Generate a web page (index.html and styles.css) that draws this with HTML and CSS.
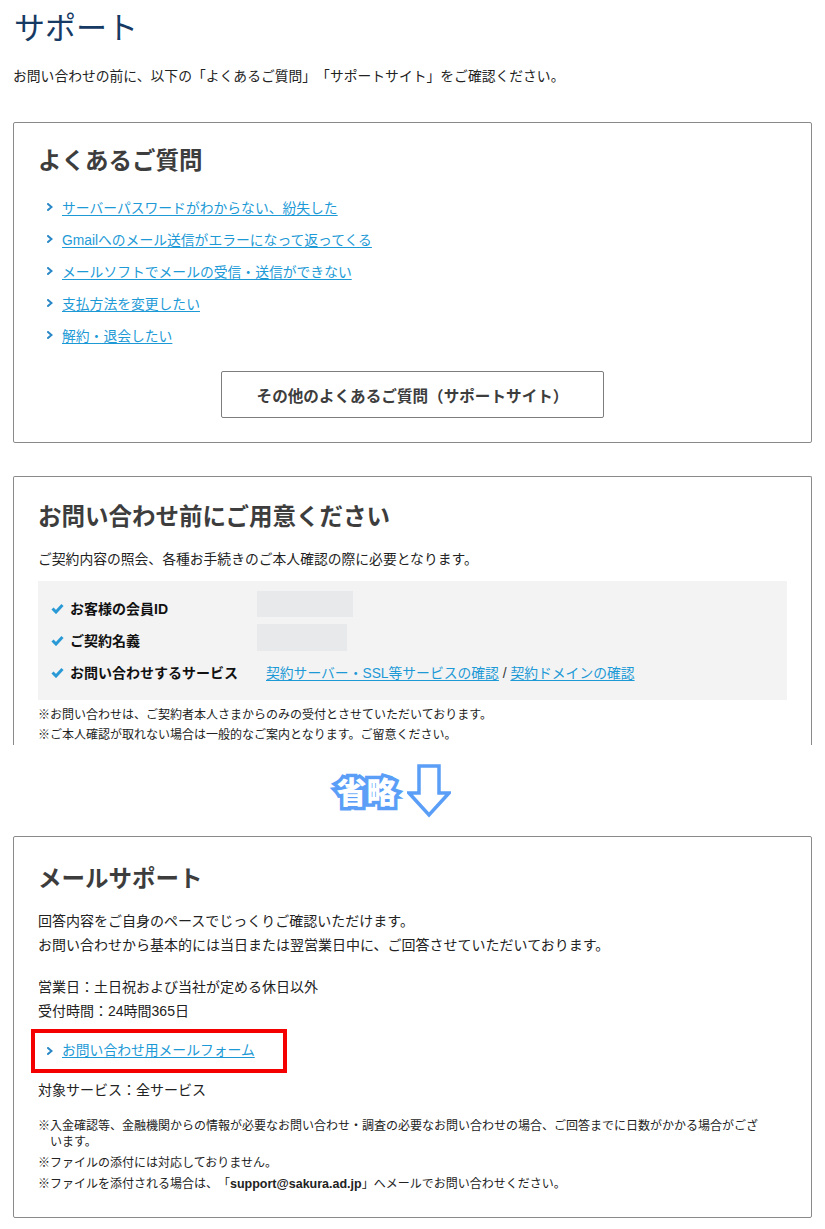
FILE: index.html
```html
<!DOCTYPE html>
<html lang="ja">
<head>
<meta charset="utf-8">
<title>サポート</title>
<link rel="stylesheet" href="styles.css">
</head>
<body>
<div class="page">
  <h1 class="page-title">サポート</h1>
  <p class="intro">お問い合わせの前に、以下の「よくあるご質問」「サポートサイト」をご確認ください。</p>

  <section class="box">
    <h2 class="box-title">よくあるご質問</h2>
    <ul class="links">
      <li><svg class="chev" viewBox="0 0 6 8"><polyline points="1,1 4.5,4 1,7"/></svg><a href="#">サーバーパスワードがわからない、紛失した</a></li>
      <li><svg class="chev" viewBox="0 0 6 8"><polyline points="1,1 4.5,4 1,7"/></svg><a href="#">Gmailへのメール送信がエラーになって返ってくる</a></li>
      <li><svg class="chev" viewBox="0 0 6 8"><polyline points="1,1 4.5,4 1,7"/></svg><a href="#">メールソフトでメールの受信・送信ができない</a></li>
      <li><svg class="chev" viewBox="0 0 6 8"><polyline points="1,1 4.5,4 1,7"/></svg><a href="#">支払方法を変更したい</a></li>
      <li><svg class="chev" viewBox="0 0 6 8"><polyline points="1,1 4.5,4 1,7"/></svg><a href="#">解約・退会したい</a></li>
    </ul>
    <div class="btn-wrap"><a class="btn" href="#">その他のよくあるご質問（サポートサイト）</a></div>
  </section>

  <section class="box cut">
    <h2 class="box-title">お問い合わせ前にご用意ください</h2>
    <p class="desc">ご契約内容の照会、各種お手続きのご本人確認の際に必要となります。</p>
    <div class="panel">
      <div class="row">
        <div class="label"><svg class="check" viewBox="0 0 13 11"><polyline points="1.5,5.5 5,9 11.5,2"/></svg>お客様の会員ID</div>
        <div class="value"><span class="mask m1"></span></div>
      </div>
      <div class="row">
        <div class="label"><svg class="check" viewBox="0 0 13 11"><polyline points="1.5,5.5 5,9 11.5,2"/></svg>ご契約名義</div>
        <div class="value"><span class="mask m2"></span></div>
      </div>
      <div class="row">
        <div class="label"><svg class="check" viewBox="0 0 13 11"><polyline points="1.5,5.5 5,9 11.5,2"/></svg>お問い合わせするサービス</div>
        <div class="value links-inline"><a href="#">契約サーバー・SSL等サービスの確認</a> / <a href="#">契約ドメインの確認</a></div>
      </div>
    </div>
    <ul class="notes small">
      <li>※お問い合わせは、ご契約者本人さまからのみの受付とさせていただいております。</li>
      <li>※ご本人確認が取れない場合は一般的なご案内となります。ご留意ください。</li>
    </ul>
  </section>

  <div class="omit">
    <span class="omit-text">省略</span>
    <svg class="omit-arrow" viewBox="0 0 44 54"><polygon points="12,2 32,2 32,29 42,29 22,51 2,29 12,29"/></svg>
  </div>

  <section class="box mail">
    <h2 class="box-title">メールサポート</h2>
    <p class="text">回答内容をご自身のペースでじっくりご確認いただけます。<br>お問い合わせから基本的には当日または翌営業日中に、ご回答させていただいております。</p>
    <p class="text gap">営業日：土日祝および当社が定める休日以外<br>受付時間：24時間365日</p>
    <div class="highlight">
      <svg class="chev" viewBox="0 0 6 8"><polyline points="1,1 4.5,4 1,7"/></svg><a href="#">お問い合わせ用メールフォーム</a>
    </div>
    <p class="text target">対象サービス：全サービス</p>
    <ul class="notes mail-notes">
      <li>※入金確認等、金融機関からの情報が必要なお問い合わせ・調査の必要なお問い合わせの場合、ご回答までに日数がかかる場合がございます。</li>
      <li>※ファイルの添付には対応しておりません。</li>
      <li>※ファイルを添付される場合は、「<b>support@sakura.ad.jp</b>」へメールでお問い合わせください。</li>
    </ul>
  </section>
</div>
</body>
</html>
```

FILE: styles.css
```css
* { box-sizing: border-box; }
html, body { margin: 0; padding: 0; background: #fff; }
body {
  font-family: "Liberation Sans", "Noto Sans CJK JP", sans-serif;
  color: #222;
  font-size: 14px;
  text-spacing-trim: space-all;
}
.page { padding: 0 13px; }
a { color: #1d9ad6; text-decoration: underline; text-underline-offset: 2px; }

.page-title {
  margin: 9px 0 0 1px;
  font-size: 31px;
  line-height: 40px;
  font-weight: 400;
  color: #163a63;
}
.intro {
  margin: 17px 0 0;
  font-size: 13.8px;
  line-height: 22px;
}

.box {
  margin-top: 34px;
  border: 1px solid #8a8a8a;
  border-radius: 2px;
  padding: 22px 24px 24px;
}
.box + .box { margin-top: 33px; }
.box.mail { margin-top: 0; padding-top: 26px; }
.box.cut {
  border-bottom: none;
  border-radius: 2px 2px 0 0;
  padding: 24px 24px 0;
}
.box-title {
  margin: 0;
  font-size: 23.5px;
  line-height: 32px;
  font-weight: 700;
  color: #3d3d3d;
}

.links { list-style: none; margin: 14px 0 0; padding: 0 0 0 9px; }
.links li { display: flex; align-items: center; height: 32px; font-size: 13.8px; }
.chev { width: 6px; height: 8px; margin-right: 9px; flex: none; }
.chev polyline { fill: none; stroke: #2b88c6; stroke-width: 2; stroke-linecap: square; }

.btn-wrap { display: flex; justify-content: center; margin-top: 20px; }
.btn {
  display: flex; align-items: center; justify-content: center;
  width: 383px; height: 47px;
  border: 1px solid #7d7d7d; border-radius: 2px;
  color: #3d3d3d; text-decoration: none;
  font-size: 15.6px; font-weight: 700;
}

.desc { margin: 16px 0 0; font-size: 13.8px; line-height: 22px; }

.panel {
  margin-top: 10px;
  background: #f3f3f3;
  padding: 11px 13px 12px;
}
.row { display: grid; grid-template-columns: 206px 1fr; height: 32px; align-items: center; }
.label { display: flex; align-items: center; font-weight: 700; font-size: 14px; color: #111; }
.check { width: 13px; height: 11px; margin-right: 6px; flex: none; }
.check polyline { fill: none; stroke: #2a9ad6; stroke-width: 3; stroke-linejoin: miter; }
.value { font-size: 13.8px; }
.mask { display: block; background: #e8e9ea; }
.row .value:has(.mask) { align-self: start; }
.m1 { width: 96px; height: 26px; margin-top: -1px; }
.m2 { width: 90px; height: 27px; }
.links-inline { padding-left: 9px; color: #333; }

.notes { list-style: none; margin: 5px 0 0; padding: 0; }
.notes.small li { font-size: 12px; line-height: 20px; }

.omit {
  height: 91px;
  display: flex; align-items: center; justify-content: center;
  gap: 10px;
  padding-right: 38px;
}
.omit-text {
  font-size: 30px; font-weight: 900; color: #fff;
  -webkit-text-stroke: 7px #5a9ef7;
  paint-order: stroke fill;
  line-height: 40px;
  margin-top: 4px;
}
.omit-arrow { width: 44px; height: 54px; }
.omit-arrow polygon { fill: #fff; stroke: #5a9ef7; stroke-width: 3.5; stroke-linejoin: miter; }

.text { margin: 14px 0 0; font-size: 14px; line-height: 24px; }
.text.gap { margin-top: 18px; }
.highlight {
  display: inline-flex; align-items: center;
  margin: 6px 0 0 -7px;
  border: 4px solid #f50000;
  padding: 7px 28px 7px 12px;
  font-size: 13.8px; line-height: 22px;
}
.text.target { margin-top: 5px; }
.mail-notes { margin-top: 16px; padding: 0 24px 1px 12px; }
.mail-notes li { font-size: 12px; line-height: 16px; text-indent: -12px; margin-bottom: 5px; }
.mail-notes li:last-child { margin-bottom: 0; }
.mail-notes b { font-weight: 700; font-size: 12.5px; }
```
